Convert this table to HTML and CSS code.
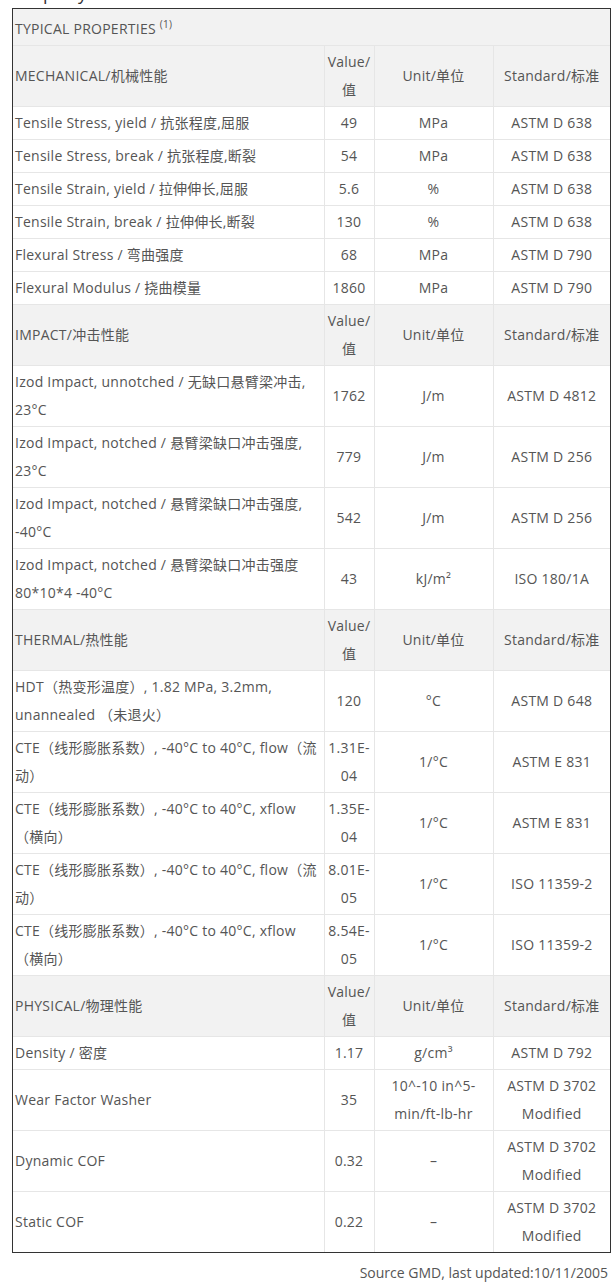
FILE: index.html
```html
<!DOCTYPE html>
<html lang="en">
<head>
  <meta charset="UTF-8">
  <meta name="viewport" content="width=device-width, initial-scale=1.0">
  <title>Typical Properties</title>
  <link rel="stylesheet" href="styles.css">
</head>
<body>
  <p class="page-title">Property</p>

  <div class="table-box">
    <table class="props">
      <colgroup>
        <col class="col-name">
        <col class="col-value">
        <col class="col-unit">
        <col class="col-std">
      </colgroup>
      <tr class="head top">
        <td colspan="4">TYPICAL PROPERTIES <sup>(1)</sup></td>
      </tr>

      <tr class="head">
        <td>MECHANICAL/机械性能</td>
        <td class="c">Value/<br>值</td>
        <td class="c">Unit/单位</td>
        <td class="c">Standard/标准</td>
      </tr>
      <tr><td>Tensile Stress, yield / 抗张程度,屈服</td><td class="c">49</td><td class="c">MPa</td><td class="c">ASTM D 638</td></tr>
      <tr><td>Tensile Stress, break / 抗张程度,断裂</td><td class="c">54</td><td class="c">MPa</td><td class="c">ASTM D 638</td></tr>
      <tr><td>Tensile Strain, yield / 拉伸伸长,屈服</td><td class="c">5.6</td><td class="c">%</td><td class="c">ASTM D 638</td></tr>
      <tr><td>Tensile Strain, break / 拉伸伸长,断裂</td><td class="c">130</td><td class="c">%</td><td class="c">ASTM D 638</td></tr>
      <tr><td>Flexural Stress / 弯曲强度</td><td class="c">68</td><td class="c">MPa</td><td class="c">ASTM D 790</td></tr>
      <tr><td>Flexural Modulus / 挠曲模量</td><td class="c">1860</td><td class="c">MPa</td><td class="c">ASTM D 790</td></tr>

      <tr class="head">
        <td>IMPACT/冲击性能</td>
        <td class="c">Value/<br>值</td>
        <td class="c">Unit/单位</td>
        <td class="c">Standard/标准</td>
      </tr>
      <tr><td>Izod Impact, unnotched / 无缺口悬臂梁冲击,<br>23°C</td><td class="c">1762</td><td class="c">J/m</td><td class="c">ASTM D 4812</td></tr>
      <tr><td>Izod Impact, notched / 悬臂梁缺口冲击强度,<br>23°C</td><td class="c">779</td><td class="c">J/m</td><td class="c">ASTM D 256</td></tr>
      <tr><td>Izod Impact, notched / 悬臂梁缺口冲击强度,<br>-40°C</td><td class="c">542</td><td class="c">J/m</td><td class="c">ASTM D 256</td></tr>
      <tr><td>Izod Impact, notched / 悬臂梁缺口冲击强度<br>80*10*4 -40°C</td><td class="c">43</td><td class="c">kJ/m²</td><td class="c">ISO 180/1A</td></tr>

      <tr class="head">
        <td>THERMAL/热性能</td>
        <td class="c">Value/<br>值</td>
        <td class="c">Unit/单位</td>
        <td class="c">Standard/标准</td>
      </tr>
      <tr><td>HDT（热变形温度）, 1.82 MPa, 3.2mm,<br>unannealed （未退火）</td><td class="c">120</td><td class="c">°C</td><td class="c">ASTM D 648</td></tr>
      <tr><td>CTE（线形膨胀系数）, -40°C to 40°C, flow（流<br>动）</td><td class="c">1.31E-<br>04</td><td class="c">1/°C</td><td class="c">ASTM E 831</td></tr>
      <tr><td>CTE（线形膨胀系数）, -40°C to 40°C, xflow<br>（横向）</td><td class="c">1.35E-<br>04</td><td class="c">1/°C</td><td class="c">ASTM E 831</td></tr>
      <tr><td>CTE（线形膨胀系数）, -40°C to 40°C, flow（流<br>动）</td><td class="c">8.01E-<br>05</td><td class="c">1/°C</td><td class="c">ISO 11359-2</td></tr>
      <tr><td>CTE（线形膨胀系数）, -40°C to 40°C, xflow<br>（横向）</td><td class="c">8.54E-<br>05</td><td class="c">1/°C</td><td class="c">ISO 11359-2</td></tr>

      <tr class="head">
        <td>PHYSICAL/物理性能</td>
        <td class="c">Value/<br>值</td>
        <td class="c">Unit/单位</td>
        <td class="c">Standard/标准</td>
      </tr>
      <tr><td>Density / 密度</td><td class="c">1.17</td><td class="c">g/cm³</td><td class="c">ASTM D 792</td></tr>
      <tr><td>Wear Factor Washer</td><td class="c">35</td><td class="c">10^-10 in^5-<br>min/ft-lb-hr</td><td class="c">ASTM D 3702<br>Modified</td></tr>
      <tr><td>Dynamic COF</td><td class="c">0.32</td><td class="c">–</td><td class="c">ASTM D 3702<br>Modified</td></tr>
      <tr><td>Static COF</td><td class="c">0.22</td><td class="c">–</td><td class="c">ASTM D 3702<br>Modified</td></tr>
    </table>
  </div>

  <p class="source">Source GMD, last updated:10/11/2005</p>
</body>
</html>
```

FILE: styles.css
```css
body {
  margin: 0;
  padding: 0 4px 0 12px;
  font-family: "Open Sans", "Noto Sans CJK SC", sans-serif;
  font-size: 14px;
  color: #555;
  background-color: #fff;
}

.page-title {
  margin: -17px 0 5px 2px;
  font-size: 18px;
  line-height: 20px;
  color: #333;
}

.table-box {
  width: 597px;
  border: 1px solid #333;
}

.props {
  width: 100%;
  border-collapse: collapse;
  border-style: hidden;
  table-layout: fixed;
}

.col-name { width: 311px; }
.col-value { width: 50px; }
.col-unit { width: 119px; }
.col-std { width: 117px; }

.props td {
  border: 1px solid #e6e6e6;
  padding: 2px 0 2px 2px;
  line-height: 28px;
  letter-spacing: 0.25px;
  vertical-align: middle;
}

.props td.c {
  text-align: center;
  padding: 2px 0;
}

.props .head td {
  background-color: #f2f2f2;
}

.props .top td {
  padding: 6px 2px 2px;
}

.props sup {
  font-size: 10px;
  line-height: 0;
}

.source {
  margin: 6px 3px 0 0;
  text-align: right;
  line-height: 28px;
}
```
